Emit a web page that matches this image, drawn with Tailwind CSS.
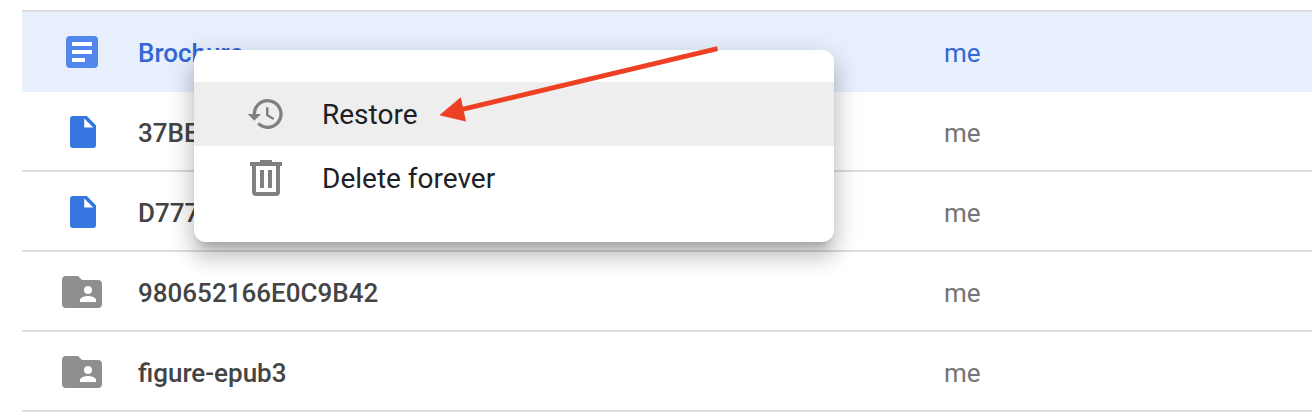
<!DOCTYPE html>
<html lang="en">
<head>
<meta charset="utf-8">
<title>Trash</title>
<script src="https://cdn.jsdelivr.net/npm/@tailwindcss/browser@4"></script>
</head>
<body class="relative h-[418px] w-[1312px] overflow-hidden bg-white font-[Roboto,sans-serif]">
<svg class="hidden">
  <symbol id="file" viewBox="0 0 26 32"><path fill="#3775e0" fill-rule="evenodd" d="M3 0H16.8L26 9.2V29a3 3 0 0 1-3 3H3a3 3 0 0 1-3-3V3a3 3 0 0 1 3-3ZM14.2 2.4V11.4H23.2Z"/></symbol>
  <symbol id="folder" viewBox="0 0 40 32"><path fill="#8f8f8f" d="M4 0H16L20 4H36a4 4 0 0 1 4 4V28a4 4 0 0 1-4 4H4a4 4 0 0 1-4-4V4a4 4 0 0 1 4-4Z"/><circle cx="26" cy="14" r="4" fill="#fff"/><path fill="#fff" d="M18 26V24c0-2.700 5.300-4 8-4s8 1.300 8 4v2Z"/></symbol>
</svg>
<main class="ml-[22px] pt-[10px] text-[26px] font-medium leading-[40px] text-[#444]">
  <div class="flex h-[82px] items-center border-t-2 border-[#dadce0] bg-[#e8f0fe] text-[#3367d6]">
    <span class="flex w-[116px] pl-[44px]"><svg class="size-8" viewBox="0 0 32 32"><rect width="32" height="32" rx="4" fill="#5386ed"/><path fill="#fff" d="M6 6h20v4H6zM6 14h20v4H6zM6 22h13v4H6z"/></svg></span>
    <span class="w-[806px] pt-0.5">Brochure</span><span class="pt-0.5 font-normal">me</span>
  </div>
  <div class="flex h-20 items-center border-b-2 border-[#dadce0] pt-0.5">
    <span class="flex w-[116px] pl-[48px]"><svg class="h-8 w-[26px]"><use href="#file"/></svg></span>
    <span class="w-[806px] pt-0.5">37BE</span><span class="pt-0.5 font-normal text-[#757575]">me</span>
  </div>
  <div class="flex h-20 items-center border-b-2 border-[#dadce0] pt-0.5">
    <span class="flex w-[116px] pl-[48px]"><svg class="h-8 w-[26px]"><use href="#file"/></svg></span>
    <span class="w-[806px] pt-0.5">D777</span><span class="pt-0.5 font-normal text-[#757575]">me</span>
  </div>
  <div class="flex h-20 items-center border-b-2 border-[#dadce0] pt-0.5">
    <span class="flex w-[116px] pl-[40px]"><svg class="h-8 w-10"><use href="#folder"/></svg></span>
    <span class="w-[806px] pt-0.5">980652166E0C9B42</span><span class="pt-0.5 font-normal text-[#757575]">me</span>
  </div>
  <div class="flex h-20 items-center border-b-2 border-[#dadce0] pt-0.5">
    <span class="flex w-[116px] pl-[40px]"><svg class="h-8 w-10"><use href="#folder"/></svg></span>
    <span class="w-[806px] pt-0.5">figure-epub3</span><span class="pt-0.5 font-normal text-[#757575]">me</span>
  </div>
</main>
<div class="absolute left-[194px] top-[50px] h-[192px] w-[640px] rounded-xl bg-white pt-8 text-[28px] leading-[42px] text-[#202124] shadow-[0_10px_10px_-6px_rgba(0,0,0,0.2),0_16px_20px_2px_rgba(0,0,0,0.14),0_6px_28px_4px_rgba(0,0,0,0.12)]">
  <div class="flex h-16 items-center bg-[#eee]">
    <span class="w-32 pl-[52px]"><svg class="size-10" viewBox="0 0 24 24" fill="#808080"><path d="M13 3a9 9 0 0 0-9 9H1l3.890 3.890.070.140L9 12H6a7 7 0 1 1 2.060 4.940l-1.420 1.420A9 9 0 1 0 13 3Zm-1 5v5l4.280 2.540.720-1.210-3.500-2.080V8H12Z"/></svg></span>
    <span class="pt-0.5">Restore</span>
  </div>
  <div class="flex h-16 items-center">
    <span class="w-32 pl-14"><svg class="h-9 w-8" viewBox="0 0 32 36" fill="#808080"><path fill-rule="evenodd" d="M10 0H22V2H32V6H30V32a4 4 0 0 1-4 4H6a4 4 0 0 1-4-4V6H0V2H10ZM6 6V32H26V6ZM10 10H14V28H10ZM18 10H22V28H18Z"/></svg></span>
    <span class="pt-0.5">Delete forever</span>
  </div>
</div>
<svg class="absolute left-[430px] top-[40px] h-[90px] w-[300px]" viewBox="430 40 300 90"><path d="M717.500 48.700 460 109.800" stroke="#ee4023" stroke-width="4.800"/><path fill="#ee4023" d="M439.300 115.300 460.800 97.300 466 121.500Z"/></svg>
</body>
</html>
